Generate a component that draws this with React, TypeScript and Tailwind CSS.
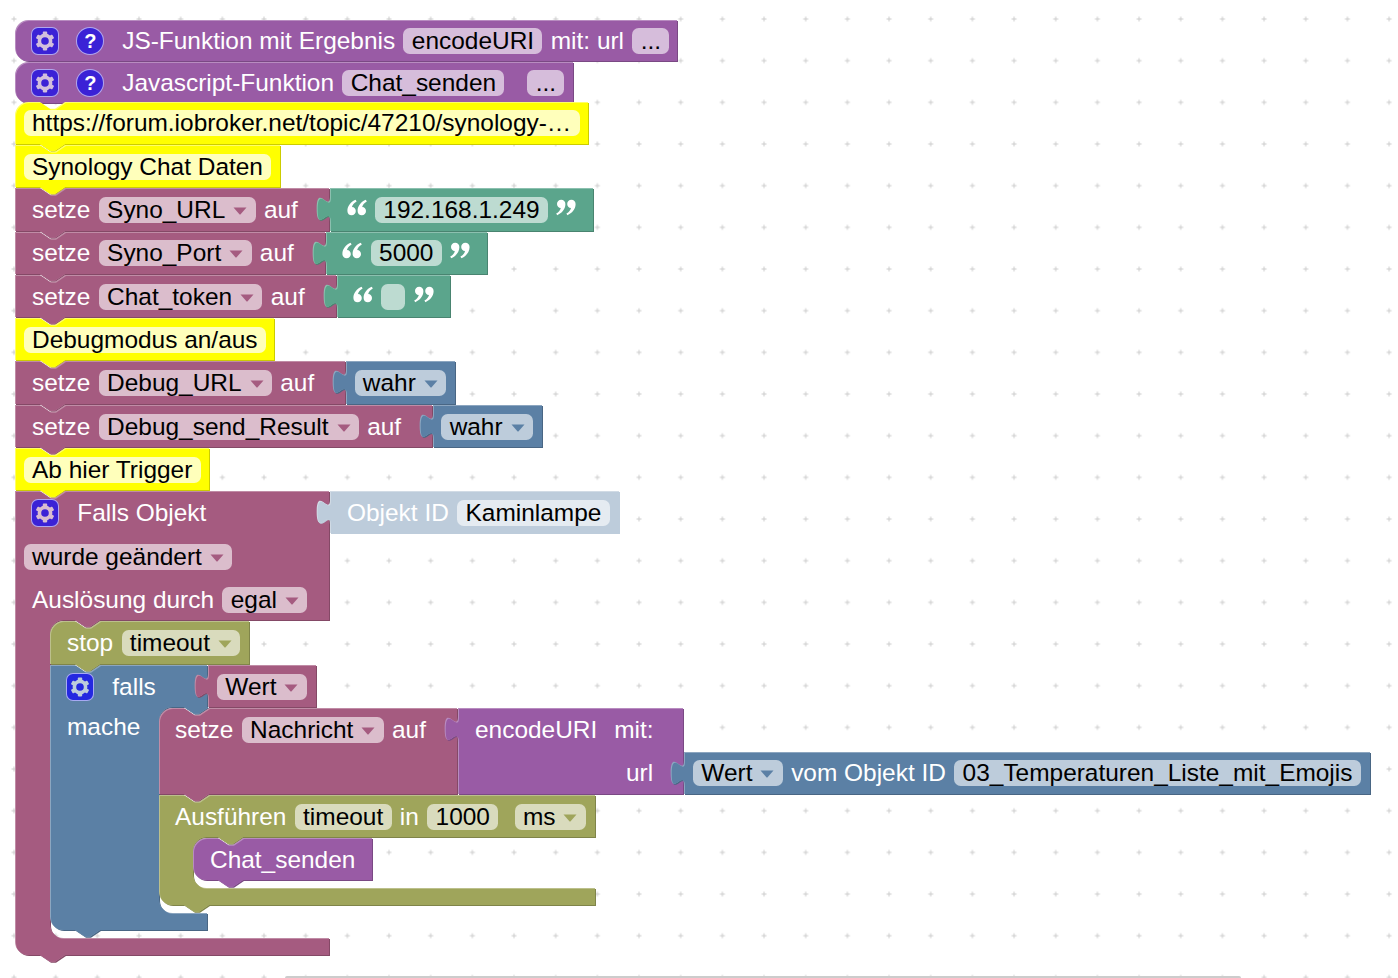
import type { ReactNode } from "react";

const S = 1.6667;
const R = 8 * S;
const NOTCH_OFFSET = 25;
const NOTCH_W = 25;
const NOTCH_H = 6.67;

type Tone = "purple" | "yellow" | "maroon" | "teal" | "blue" | "olive" | "ghost";

const palette: Record<Tone, { fill: string; light: string; dark: string }> = {
  purple: { fill: "#995BA5", light: "#B88CC0", dark: "#7A4984" },
  yellow: { fill: "#FFFF00", light: "#FFFF66", dark: "#CCCC00" },
  maroon: { fill: "#A55B80", light: "#C08CA6", dark: "#844966" },
  teal: { fill: "#5BA58C", light: "#8CC0AF", dark: "#498470" },
  blue: { fill: "#5B80A5", light: "#8CA6C0", dark: "#496684" },
  olive: { fill: "#9FA55B", light: "#BCC08C", dark: "#7F8449" },
  ghost: { fill: "#BDCCDB", light: "#D1DBE5", dark: "#BDCCDB" },
};

const chipBg: Record<Tone, string> = {
  purple: "bg-[#D6BDDB]",
  yellow: "bg-[#FFFFBB]",
  maroon: "bg-[#DBBDCC]",
  teal: "bg-[#BDDBD1]",
  blue: "bg-[#BDCCDB]",
  olive: "bg-[#D9DBBD]",
  ghost: "bg-[#E5EBF1]",
};

const arrowText: Record<Tone, string> = {
  purple: "text-[#995BA5]",
  yellow: "text-[#FFFF00]",
  maroon: "text-[#A55B80]",
  teal: "text-[#5BA58C]",
  blue: "text-[#5B80A5]",
  olive: "text-[#9FA55B]",
  ghost: "text-[#5B80A5]",
};

type Shape = {
  tone: Tone;
  x: number;
  y: number;
  r: number; // right edge
  b: number; // bottom edge
  tl?: boolean;
  bl?: boolean;
  notch?: boolean;
  tab?: boolean;
  output?: boolean;
  arm?: { x: number; top: number; bottom: number };
};

function outline({ x, y, r, b, tl, bl, notch, tab, output, arm }: Shape) {
  // the dark copy sits 1px right and below, so the body stops 1px short
  const right = r - 1;
  const bottom = b - 1;
  const notchDown = `l 10,${NOTCH_H} h 5 l 10,-${NOTCH_H}`;
  const tabLeft = `l -10,${NOTCH_H} h -5 l -10,-${NOTCH_H}`;
  let d = tl ? `M ${x},${y + R} a ${R},${R} 0 0 1 ${R},-${R}` : `M ${x},${y}`;
  if (notch) d += ` H ${x + NOTCH_OFFSET} ${notchDown}`;
  d += ` H ${right}`;
  if (arm) {
    d += ` V ${arm.top - 1} H ${arm.x + NOTCH_OFFSET + NOTCH_W} ${tabLeft}`;
    d += ` H ${arm.x + R} a ${R},${R} 0 0 0 -${R},${R} V ${arm.bottom - R}`;
    d += ` a ${R},${R} 0 0 0 ${R},${R} H ${right}`;
  }
  d += ` V ${bottom}`;
  if (tab) d += ` H ${x + NOTCH_OFFSET + NOTCH_W} ${tabLeft}`;
  if (bl) d += ` H ${x + R} a ${R},${R} 0 0 1 -${R},-${R}`;
  else d += ` H ${x}`;
  if (output) {
    d += ` V ${y + 33.33} c 0,-16.67 -13.33,13.33 -13.33,-12.5 s 13.33,4.17 13.33,-12.5`;
  }
  return d + " Z";
}

const shapes: Shape[] = [
  { tone: "purple", x: 15, y: 20, r: 678, b: 62, tl: true, bl: true },
  { tone: "purple", x: 15, y: 62, r: 574, b: 104, tl: true, bl: true },
  { tone: "yellow", x: 15, y: 102, r: 589, b: 145, tl: true, notch: true, tab: true },
  { tone: "yellow", x: 15, y: 145, r: 281, b: 188, notch: true, tab: true },
  { tone: "maroon", x: 15, y: 188, r: 330, b: 232, notch: true, tab: true },
  { tone: "teal", x: 330, y: 188, r: 594, b: 232, output: true },
  { tone: "maroon", x: 15, y: 232, r: 326, b: 275, notch: true, tab: true },
  { tone: "teal", x: 326, y: 232, r: 488, b: 275, output: true },
  { tone: "maroon", x: 15, y: 275, r: 337, b: 318, notch: true, tab: true },
  { tone: "teal", x: 337, y: 275, r: 451, b: 318, output: true },
  { tone: "yellow", x: 15, y: 318, r: 275, b: 361, notch: true, tab: true },
  { tone: "maroon", x: 15, y: 361, r: 346, b: 405, notch: true, tab: true },
  { tone: "blue", x: 346, y: 361, r: 456, b: 405, output: true },
  { tone: "maroon", x: 15, y: 405, r: 433, b: 448, notch: true, tab: true },
  { tone: "blue", x: 433, y: 405, r: 543, b: 448, output: true },
  { tone: "yellow", x: 15, y: 448, r: 210, b: 491, notch: true, tab: true },
  {
    tone: "maroon",
    x: 15,
    y: 491,
    r: 330,
    b: 956,
    bl: true,
    notch: true,
    tab: true,
    arm: { x: 50, top: 621, bottom: 938 },
  },
  { tone: "ghost", x: 330, y: 491, r: 620, b: 534, output: true },
  { tone: "olive", x: 50, y: 621, r: 250, b: 665, tl: true, notch: true, tab: true },
  {
    tone: "blue",
    x: 50,
    y: 665,
    r: 208,
    b: 931,
    bl: true,
    notch: true,
    tab: true,
    arm: { x: 159, top: 708, bottom: 913 },
  },
  { tone: "maroon", x: 208, y: 665, r: 317, b: 708, output: true },
  { tone: "maroon", x: 159, y: 708, r: 458, b: 795, tl: true, notch: true, tab: true },
  { tone: "purple", x: 458, y: 708, r: 684, b: 795, output: true },
  { tone: "blue", x: 684, y: 752, r: 1371, b: 795, output: true },
  {
    tone: "olive",
    x: 159,
    y: 795,
    r: 596,
    b: 906,
    bl: true,
    notch: true,
    tab: true,
    arm: { x: 193, top: 838, bottom: 888 },
  },
  { tone: "purple", x: 193, y: 838, r: 373, b: 881, tl: true, bl: true, notch: true, tab: true },
];

function BlockShapes() {
  return (
    <svg className="absolute inset-0" width={1398} height={978}>
      {shapes.map((s, i) => {
        const c = palette[s.tone];
        const d = outline(s);
        return (
          <g key={i}>
            <clipPath id={`clip-${i}`}>
              <path d={d} />
            </clipPath>
            <path d={d} fill={c.dark} transform="translate(1,1)" />
            <path d={d} fill={c.light} />
            <g clipPath={`url(#clip-${i})`}>
              <path d={d} fill={c.fill} transform="translate(1,1)" />
            </g>
          </g>
        );
      })}
    </svg>
  );
}

function GridDots() {
  return (
    <svg className="absolute inset-0" width={1398} height={978}>
      <defs>
        <pattern id="dots" x={-6.83} y={-1.83} width={41.67} height={41.67} patternUnits="userSpaceOnUse">
          <path d="M18.33 20.83h5M20.83 18.33v5" stroke="#ccc" strokeWidth={1} fill="none" />
        </pattern>
      </defs>
      <rect width={1398} height={978} fill="url(#dots)" />
    </svg>
  );
}

const Row = ({ x, cy, children }: { x: number; cy: number; children: ReactNode }) => (
  <div
    className="absolute flex h-[26px] items-center gap-[8.33px] whitespace-nowrap"
    style={{ left: x, top: cy - 13 }}
  >
    {children}
  </div>
);

const Label = ({ children, className = "" }: { children: ReactNode; className?: string }) => (
  <span className={`text-white ${className}`}>{children}</span>
);

const Field = ({
  tone,
  text,
  arrow,
  className = "",
}: {
  tone: Tone;
  text?: string;
  arrow?: boolean;
  className?: string;
}) => (
  <span
    className={`flex h-[26px] min-w-[24px] items-center rounded-[6.67px] px-[8.33px] text-black ${chipBg[tone]} ${className}`}
  >
    {text}
    {arrow && (
      <svg className={`ml-[8px] mt-[2px] ${arrowText[tone]}`} width={14} height={8} viewBox="0 0 14 8">
        <path d="M0.5 0.5H13.5L7.6 7.2Q7 7.8 6.4 7.2Z" fill="currentColor" />
      </svg>
    )}
  </span>
);

const Gear = ({ bg, fg, className = "" }: { bg: string; fg: string; className?: string }) => (
  <span
    className={`flex h-[28px] w-[28px] flex-none items-center justify-center rounded-[7px] border-[1.5px] border-white/60 ${bg} ${fg} ${className}`}
  >
    <svg width={20} height={20} viewBox="-10 -10 20 20">
      <circle r={5.6} fill="none" stroke="currentColor" strokeWidth={3.6} />
      {[0, 60, 120, 180, 240, 300].map((a) => (
        <rect key={a} x={-2.2} y={-9.4} width={4.4} height={4} rx={0.8} fill="currentColor" transform={`rotate(${a})`} />
      ))}
    </svg>
  </span>
);

const Help = ({ className = "" }: { className?: string }) => (
  <span
    className={`flex h-[28px] w-[28px] flex-none items-center justify-center rounded-full border-[1.5px] border-white/60 bg-[#3B22D6] text-[20px] font-bold text-white ${className}`}
  >
    ?
  </span>
);

const QUOTE_MARK =
  "M8.6 0.4C4 2.4 0.4 6.4 0.4 11.6C0.4 14.2 2.2 16 4.6 16C7 16 8.8 14.2 8.8 11.8C8.8 9.6 7.2 7.8 5 7.8C5.4 5.6 7 3.6 9.6 2.1Z";

const Quote = ({ close }: { close?: boolean }) => (
  <svg className="-mt-[5px] flex-none" width={20} height={17} viewBox="0 0 20 16.4">
    <g transform={close ? "rotate(180 10 8.2)" : undefined} fill="#fff">
      <path d={QUOTE_MARK} />
      <path d={QUOTE_MARK} transform="translate(10.2 0)" />
    </g>
  </svg>
);

export default function App() {
  return (
    <div className="relative h-[978px] w-[1398px] overflow-hidden bg-white font-['Liberation_Sans',Arial,sans-serif] text-[24.44px]">
      <GridDots />
      <BlockShapes />

      {/* function definitions */}
      <Row x={31} cy={41}>
        <Gear bg="bg-[#3B22D6]" fg="text-[#D2BFDC]" />
        <Help className="ml-[9px]" />
        <Label className="ml-[9.5px]">JS-Funktion mit Ergebnis</Label>
        <Field tone="purple" text="encodeURI" />
        <Label>mit: url</Label>
        <Field tone="purple" text="..." />
      </Row>
      <Row x={31} cy={83}>
        <Gear bg="bg-[#3B22D6]" fg="text-[#D2BFDC]" />
        <Help className="ml-[9px]" />
        <Label className="ml-[9.5px]">Javascript-Funktion</Label>
        <Field tone="purple" text="Chat_senden" />
        <Field tone="purple" text="..." className="ml-[14.67px]" />
      </Row>

      {/* comments */}
      <Row x={23.7} cy={123}>
        <Field tone="yellow" text="https://forum.iobroker.net/topic/47210/synology-…" />
      </Row>
      <Row x={23.7} cy={167}>
        <Field tone="yellow" text="Synology Chat Daten" />
      </Row>

      {/* variables */}
      <Row x={32} cy={210}>
        <Label>setze</Label>
        <Field tone="maroon" text="Syno_URL" arrow />
        <Label>auf</Label>
      </Row>
      <Row x={346.7} cy={210}>
        <Quote />
        <Field tone="teal" text="192.168.1.249" />
        <Quote close />
      </Row>
      <Row x={32} cy={253}>
        <Label>setze</Label>
        <Field tone="maroon" text="Syno_Port" arrow />
        <Label>auf</Label>
      </Row>
      <Row x={342.4} cy={253}>
        <Quote />
        <Field tone="teal" text="5000" />
        <Quote close />
      </Row>
      <Row x={32} cy={297}>
        <Label>setze</Label>
        <Field tone="maroon" text="Chat_token" arrow />
        <Label>auf</Label>
      </Row>
      <Row x={353} cy={297}>
        <Quote />
        <Field tone="teal" />
        <Quote close />
      </Row>

      <Row x={23.7} cy={340}>
        <Field tone="yellow" text="Debugmodus an/aus" />
      </Row>
      <Row x={32} cy={383}>
        <Label>setze</Label>
        <Field tone="maroon" text="Debug_URL" arrow />
        <Label>auf</Label>
      </Row>
      <Row x={354.5} cy={383}>
        <Field tone="blue" text="wahr" arrow />
      </Row>
      <Row x={32} cy={427}>
        <Label>setze</Label>
        <Field tone="maroon" text="Debug_send_Result" arrow />
        <Label>auf</Label>
      </Row>
      <Row x={441.3} cy={427}>
        <Field tone="blue" text="wahr" arrow />
      </Row>
      <Row x={23.7} cy={470}>
        <Field tone="yellow" text="Ab hier Trigger" />
      </Row>

      {/* trigger */}
      <Row x={31} cy={513}>
        <Gear bg="bg-[#3B22D6]" fg="text-[#D9BDCF]" />
        <Label className="ml-[10px]">Falls Objekt</Label>
      </Row>
      <Row x={347} cy={513}>
        <Label>Objekt ID</Label>
        <Field tone="ghost" text="Kaminlampe" />
      </Row>
      <Row x={23.7} cy={557}>
        <Field tone="maroon" text="wurde geändert" arrow />
      </Row>
      <Row x={32} cy={600}>
        <Label>Auslösung durch</Label>
        <Field tone="maroon" text="egal" arrow />
      </Row>
      <Row x={67} cy={643}>
        <Label>stop</Label>
        <Field tone="olive" text="timeout" arrow />
      </Row>
      <Row x={66} cy={687}>
        <Gear bg="bg-[#2428E0]" fg="text-[#BDCCDB]" />
        <Label className="ml-[10px]">falls</Label>
      </Row>
      <Row x={217} cy={687}>
        <Field tone="maroon" text="Wert" arrow />
      </Row>
      <Row x={67} cy={727}>
        <Label>mache</Label>
      </Row>
      <Row x={175} cy={730}>
        <Label>setze</Label>
        <Field tone="maroon" text="Nachricht" arrow />
        <Label>auf</Label>
      </Row>
      <Row x={475} cy={730}>
        <Label>encodeURI</Label>
        <Label className="ml-[8.67px]">mit:</Label>
      </Row>
      <Row x={626} cy={773}>
        <Label>url</Label>
      </Row>
      <Row x={693} cy={773}>
        <Field tone="blue" text="Wert" arrow />
        <Label>vom Objekt ID</Label>
        <Field tone="blue" text="03_Temperaturen_Liste_mit_Emojis" />
      </Row>
      <Row x={175} cy={817}>
        <Label>Ausführen</Label>
        <Field tone="olive" text="timeout" />
        <Label>in</Label>
        <Field tone="olive" text="1000" />
        <Field tone="olive" text="ms" arrow className="ml-[8px]" />
      </Row>
      <Row x={210} cy={860}>
        <Label>Chat_senden</Label>
      </Row>

      {/* workspace scrollbar */}
      <div className="absolute bottom-0 left-[285px] h-[2px] w-[956px] rounded-t-[2px] bg-[#ccc]" />
    </div>
  );
}
